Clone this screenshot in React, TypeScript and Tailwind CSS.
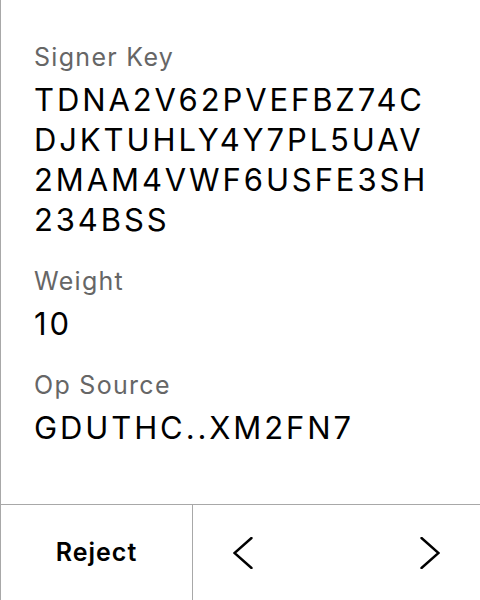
const fields = [
    { label: 'Signer Key', value: 'TDNA2V62PVEFBZ74CDJKTUHLY4Y7PL5UAV2MAM4VWF6USFE3SH234BSS' },
    { label: 'Weight', value: '10' },
    { label: 'Op Source', value: 'GDUTHC..XM2FN7' },
];

const Chevron = ({ dir }: { dir: 'left' | 'right' }) => (
    <svg width="20" height="32" viewBox="0 0 20 32" fill="none" stroke="black" strokeWidth="2.4" strokeLinecap="round" strokeLinejoin="miter">
        {dir === 'left' ? <polyline points="18.5,1 1.5,16 18.5,31" /> : <polyline points="1.5,1 18.5,16 1.5,31" />}
    </svg>
);

const App = () => {
    return (
        <div
            className="w-[480px] h-[600px] flex flex-col bg-white text-black border-l border-[#a8a8a8]"
            style={{ fontFamily: 'Inter, "Noto Sans", sans-serif' }}
        >
            <main className="flex-1 pt-[16px] pl-[33px] pr-[36px]">
                {fields.map((f) => (
                    <section key={f.label} className="mt-[25px]">
                        <div className="text-[25px] leading-[32px] tracking-[1.3px] text-[#666666]">{f.label}</div>
                        <div className="mt-[7px] text-[31px] leading-[40px] tracking-[2.9px] break-all">{f.value}</div>
                    </section>
                ))}
            </main>

            <footer className="h-[96px] flex border-t border-[#a8a8a8]">
                <button className="w-[192px] flex items-center justify-center text-[25px] font-semibold tracking-[1px] border-r border-[#a8a8a8]">
                    Reject
                </button>
                <div className="flex-1 flex items-center justify-between pl-[40px] pr-[40px]">
                    <button className="flex items-center justify-center">
                        <Chevron dir="left" />
                    </button>
                    <button className="flex items-center justify-center">
                        <Chevron dir="right" />
                    </button>
                </div>
            </footer>
        </div>
    );
};

export default App;
